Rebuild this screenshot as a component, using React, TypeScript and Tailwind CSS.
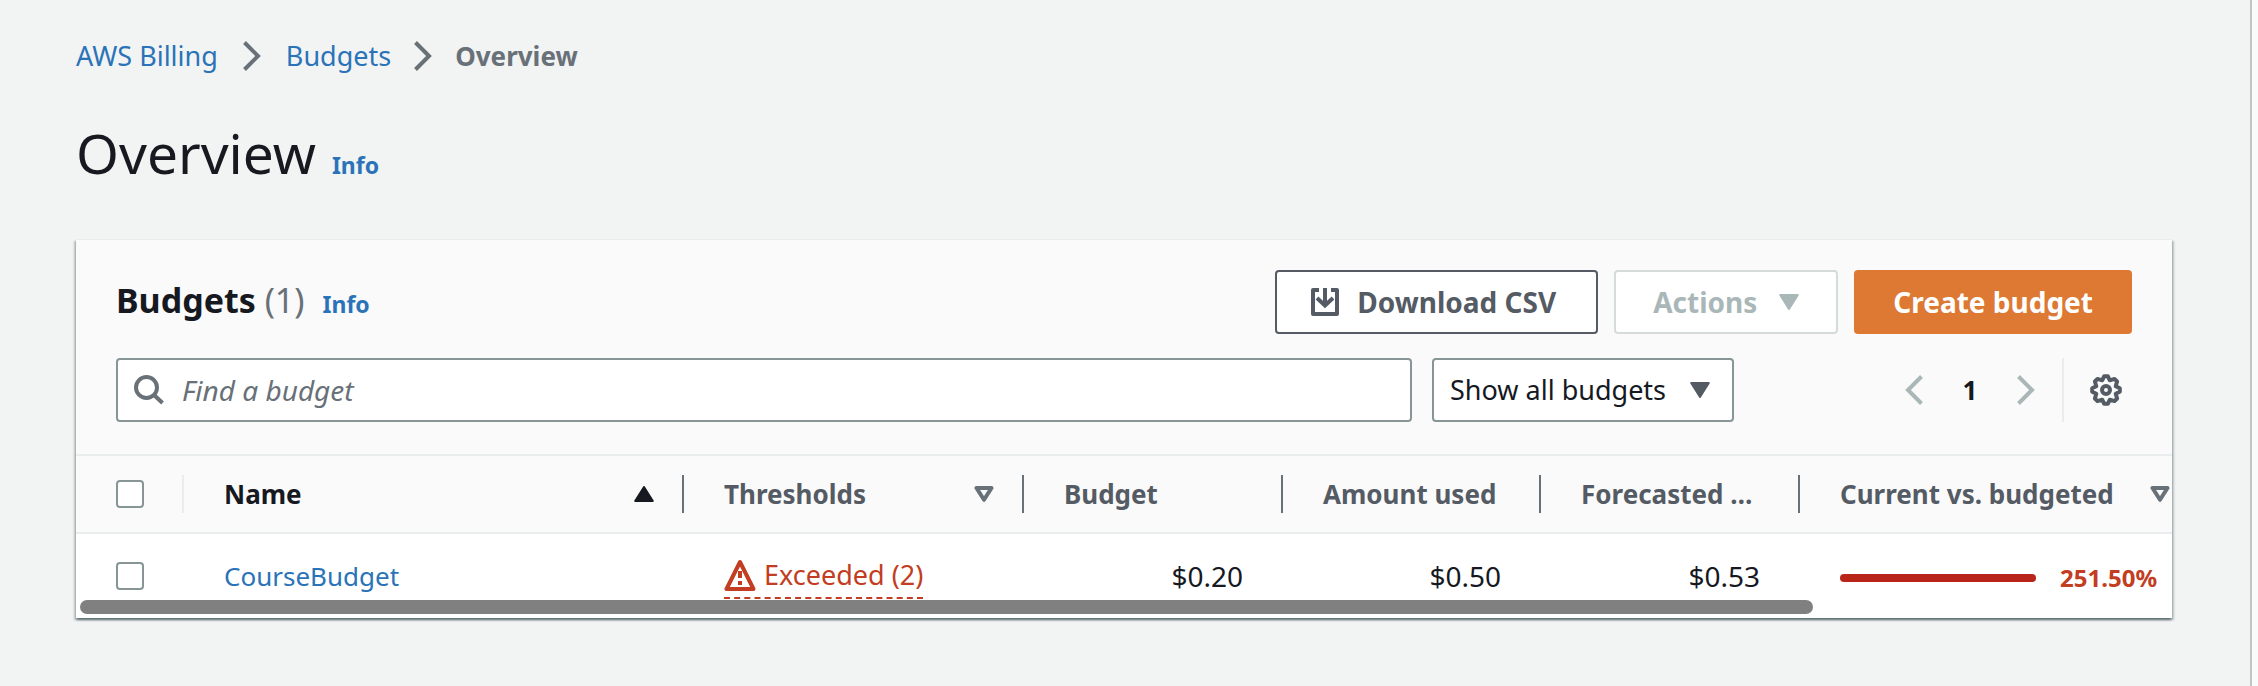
import React from "react";

function Chevron({ className, flip = false }: { className: string; flip?: boolean }) {
  return (
    <svg className={className} viewBox="0 0 20 32" fill="none" stroke="currentColor" strokeWidth="4" aria-hidden="true">
      <path d={flip ? "M17.500 2.500 4 16l13.500 13.500" : "M2.500 2.500 16 16 2.500 29.500"} />
    </svg>
  );
}

function CaretDown({ className }: { className: string }) {
  return (
    <svg className={className} viewBox="0 0 20 16" fill="currentColor" stroke="currentColor" strokeWidth="2" strokeLinejoin="round" aria-hidden="true">
      <path d="M1.200 1h17.600L10 15z" />
    </svg>
  );
}

function SortAscending() {
  return (
    <svg className="h-4 w-5 shrink-0" viewBox="0 0 20 16" fill="currentColor" stroke="currentColor" strokeWidth="2" strokeLinejoin="round" aria-hidden="true">
      <path d="M1.200 15h17.600L10 1z" />
    </svg>
  );
}

function SortNone() {
  return (
    <svg className="h-4 w-5 shrink-0 text-[#687078]" viewBox="0 0 20 16" fill="none" stroke="currentColor" strokeWidth="4" strokeLinejoin="round" aria-hidden="true">
      <path d="M2.500 2h15L10 13.800z" />
    </svg>
  );
}

function DownloadIcon() {
  return (
    <svg className="size-7 shrink-0" viewBox="0 0 28 28" fill="none" stroke="currentColor" strokeWidth="4" aria-hidden="true">
      <path d="M8 2H2v24h24V2h-6" strokeLinejoin="round" />
      <path d="M14 0v17M6 10l8 7.500 8-7.500" />
    </svg>
  );
}

function SearchIcon() {
  return (
    <svg className="size-[30px] shrink-0 text-[#687078]" viewBox="0 0 30 30" fill="none" stroke="currentColor" strokeWidth="4" aria-hidden="true">
      <circle cx="12.500" cy="12.500" r="10.500" />
      <path d="m19.500 19.500 9 8.500" />
    </svg>
  );
}

function GearIcon() {
  return (
    <svg className="size-8" viewBox="0 0 32 32" fill="none" stroke="currentColor" strokeWidth="4" strokeLinejoin="round" aria-hidden="true">
      <path d="M14.200 2.200H17.800L19.800 6.300 24.500 4.900 27.100 7.500 25.700 12.200 29.800 14.200V17.800L25.700 19.800 27.100 24.500 24.500 27.100 19.800 25.700 17.800 29.800H14.200L12.200 25.700 7.500 27.100 4.900 24.500 6.300 19.800 2.200 17.800V14.200L6.300 12.200 4.900 7.500 7.500 4.900 12.200 6.300z" />
      <circle cx="16" cy="16" r="4" />
    </svg>
  );
}

function WarningIcon() {
  return (
    <svg className="size-8 shrink-0" viewBox="0 0 32 32" fill="none" stroke="currentColor" strokeWidth="4" aria-hidden="true">
      <path d="M16 3 2.500 30h27z" strokeLinejoin="round" />
      <path d="M16 12v7M16 22v4" />
    </svg>
  );
}

function Checkbox({ label }: { label: string }) {
  return (
    <input
      type="checkbox"
      aria-label={label}
      className="block size-7 appearance-none rounded-[4px] border-2 border-[#879596] bg-white checked:bg-[#0073bb]"
    />
  );
}

function HeaderCell({
  children,
  active = false,
  last = false,
  icon,
}: {
  children: React.ReactNode;
  active?: boolean;
  last?: boolean;
  icon?: React.ReactNode;
}) {
  return (
    <th scope="col" className="p-0 text-left">
      <div
        className={`flex h-[38px] items-center justify-between pl-10 text-[26px] font-bold ${
          last ? "w-[370px]" : "border-r-2 border-[#687078] pr-7"
        } ${active ? "text-[#16191f]" : "text-[#545b64]"}`}
      >
        <span className="whitespace-nowrap">{children}</span>
        {icon}
      </div>
    </th>
  );
}

export default function App() {
  return (
    <div className="min-h-screen bg-[#fafafa] pr-1.5 font-['Noto_Sans',sans-serif] text-[27px] leading-[44px] text-[#16191f]">
      <main className="min-h-screen border-r-2 border-[#c0c4c4] bg-[#f2f3f3] pt-[34px] pr-[78px] pl-[76px]">
        <nav aria-label="Breadcrumb">
          <ol className="flex items-center">
            <li><a href="#billing" className="text-[#2a73b8]">AWS Billing</a></li>
            <li className="mx-6 text-[#687078]"><Chevron className="h-8 w-5" /></li>
            <li><a href="#budgets" className="text-[#2a73b8]">Budgets</a></li>
            <li className="mx-[22px] text-[#687078]"><Chevron className="h-8 w-5" /></li>
            <li aria-current="page" className="text-[26px] font-bold text-[#687078]">Overview</li>
          </ol>
        </nav>

        <header className="mt-[35px] flex items-baseline gap-4">
          <h1 className="text-[55px] leading-[80px]">Overview</h1>
          <a href="#info" className="text-[23px] font-bold text-[#2a73b8]">Info</a>
        </header>

        <section className="relative mt-[46px] border-t border-[#eaeded] bg-[#fafafa] shadow-[0_2px_2px_0_rgba(0,28,36,0.4),2px_2px_2px_0_rgba(0,28,36,0.2),-2px_2px_2px_0_rgba(0,28,36,0.2)]">
          <div className="px-10 pt-[30px] pb-8">
            <div className="flex items-center justify-between">
              <div className="flex items-baseline">
                <h2 className="text-[34px] font-bold">
                  Budgets <span className="font-normal text-[#687078]">(1)</span>
                </h2>
                <a href="#budgets-info" className="ml-[18px] text-[23px] font-bold text-[#2a73b8]">Info</a>
              </div>
              <div className="flex gap-4 text-[28px] font-bold">
                <button type="button" className="flex h-16 items-center gap-[18px] rounded-[4px] border-2 border-[#545b64] bg-white pr-10 pl-[34px] text-[#545b64]">
                  <DownloadIcon />
                  Download CSV
                </button>
                <button type="button" disabled className="flex h-16 items-center gap-[22px] rounded-[4px] border-2 border-[#d5dbdb] bg-white px-[37px] text-[#aab7b8]">
                  Actions
                  <CaretDown className="h-4 w-5" />
                </button>
                <button type="button" className="h-16 rounded-[4px] bg-[#dd7933] px-[39px] text-white">
                  Create budget
                </button>
              </div>
            </div>

            <div className="mt-6 flex items-center">
              <label className="flex h-16 min-w-0 flex-1 items-center gap-[18px] rounded-[4px] border-2 border-[#879596] bg-white pl-4">
                <SearchIcon />
                <input
                  type="search"
                  aria-label="Find a budget"
                  placeholder="Find a budget"
                  className="min-w-0 flex-1 bg-transparent text-[28px] outline-none placeholder:text-[#687078] placeholder:italic"
                />
              </label>
              <div className="relative ml-5">
                <select aria-label="Budget filter" className="block h-16 w-[302px] appearance-none rounded-[4px] border-2 border-[#879596] bg-white pl-4">
                  <option>Show all budgets</option>
                </select>
                <CaretDown className="pointer-events-none absolute top-6 right-6 h-4 w-5 text-[#545b64]" />
              </div>
              <div className="ml-[170px] flex items-center">
                <button type="button" aria-label="Previous page" disabled className="text-[#aab7b8]"><Chevron flip className="h-8 w-5" /></button>
                <span className="w-[92px] text-center text-[26px] font-bold">1</span>
                <button type="button" aria-label="Next page" disabled className="text-[#aab7b8]"><Chevron className="h-8 w-5" /></button>
                <div className="ml-[26px] flex h-16 items-center border-l-2 border-[#eaeded] pr-2.5 pl-[26px]">
                  <button type="button" aria-label="Preferences" className="text-[#545b64]"><GearIcon /></button>
                </div>
              </div>
            </div>
          </div>

          <div className="h-[164px] overflow-hidden">
            <table className="w-[2525px] table-fixed border-collapse">
              <colgroup>
                <col className="w-[108px]" />
                <col className="w-[500px]" />
                <col className="w-[340px]" />
                <col className="w-[259px]" />
                <col className="w-[258px]" />
                <col className="w-[259px]" />
                <col />
              </colgroup>
              <thead>
                <tr className="h-[78px] border-y-2 border-[#eaeded]">
                  <th scope="col" className="p-0">
                    <div className="flex h-[38px] items-center border-r-2 border-[#eaeded] pl-10">
                      <Checkbox label="Select all budgets" />
                    </div>
                  </th>
                  <HeaderCell active icon={<SortAscending />}>Name</HeaderCell>
                  <HeaderCell icon={<SortNone />}>Thresholds</HeaderCell>
                  <HeaderCell>Budget</HeaderCell>
                  <HeaderCell>Amount used</HeaderCell>
                  <HeaderCell>Forecasted …</HeaderCell>
                  <HeaderCell last icon={<SortNone />}>Current vs. budgeted</HeaderCell>
                </tr>
              </thead>
              <tbody>
                <tr className="h-[84px] bg-white">
                  <td className="p-0 pl-10"><Checkbox label="Select CourseBudget" /></td>
                  <td className="p-0 pl-10 text-[26px]"><a href="#course-budget" className="text-[#2a73b8]">CourseBudget</a></td>
                  <td className="p-0 pl-10">
                    <button type="button" className="flex items-center gap-2 border-b-2 border-dashed border-[#c23d21] text-[#c23d21]">
                      <WarningIcon />
                      Exceeded (2)
                    </button>
                  </td>
                  <td className="p-0 pr-10 text-right text-[28px]">$0.20</td>
                  <td className="p-0 pr-10 text-right text-[28px]">$0.50</td>
                  <td className="p-0 pr-10 text-right text-[28px]">$0.53</td>
                  <td className="p-0 pt-1 pl-10">
                    <div className="flex items-center gap-6">
                      <div role="progressbar" aria-label="Current vs. budgeted" aria-valuenow={100} className="h-2 w-[196px] rounded-full bg-[#ba2519]" />
                      <span className="text-[24px] font-bold text-[#c23d21]">251.50%</span>
                    </div>
                  </td>
                </tr>
                <tr className="h-4 bg-white"><td colSpan={7} /></tr>
              </tbody>
            </table>
          </div>
          <div className="absolute bottom-1 left-1 h-3.5 w-[82.7%] rounded-full bg-[#808080]" />
        </section>
      </main>
    </div>
  );
}
